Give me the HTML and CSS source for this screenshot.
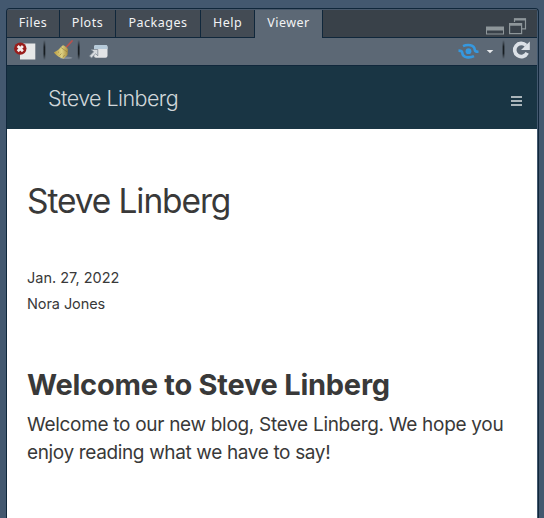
FILE: index.html
```html
<!DOCTYPE html>
<html lang="en">
<head>
<meta charset="utf-8">
<title>Viewer</title>
<link rel="stylesheet" href="styles.css">
</head>
<body>
<main class="pane">
  <nav class="tabs">
    <span class="tab files"><span>Files</span></span>
    <span class="tab plots"><span>Plots</span></span>
    <span class="tab packages"><span>Packages</span></span>
    <span class="tab help"><span>Help</span></span>
    <span class="tab viewer"><span>Viewer</span></span>
    <svg class="window-controls" width="42" height="19" viewBox="0 0 42 19">
      <rect x="1" y="8.500" width="18" height="8" fill="#8e969a"/>
      <rect x="2" y="12.500" width="16" height="3" fill="#394149"/>
      <path d="M29.500 4V.8h11v10h-3.500" fill="none" stroke="#8e969a" stroke-width="1.200"/>
      <path d="M29 1.500h12" stroke="#8e969a" stroke-width="2"/>
      <rect x="24.600" y="5.600" width="12" height="10" fill="#394149" stroke="#8e969a" stroke-width="1.200"/>
      <path d="M24 6.500h13" stroke="#8e969a" stroke-width="2.500"/>
    </svg>
  </nav>
  <div class="toolbar">
    <svg width="110" height="27" viewBox="7 38 110 27">
      <defs>
        <linearGradient id="sep" x2="0" y2="1"><stop stop-color="#171d22" stop-opacity="0"/><stop offset=".35" stop-color="#171d22"/><stop offset=".7" stop-color="#171d22"/><stop offset="1" stop-color="#171d22" stop-opacity="0"/></linearGradient>
        <linearGradient id="straw"><stop stop-color="#b99b41"/><stop offset=".55" stop-color="#ded283"/><stop offset="1" stop-color="#a78b3d"/></linearGradient>
      </defs>
      <rect x="20" y="43.500" width="15.300" height="16" fill="#e7e8e8"/>
      <circle cx="20.300" cy="48.600" r="6.200" fill="#991d1b"/>
      <path d="M17.700 46l5.200 5.200m0-5.200l-5.200 5.200" stroke="#f5eeee" stroke-width="2.700"/>
      <rect x="43.500" y="40" width="1.800" height="20" fill="url(#sep)"/>
      <ellipse cx="66" cy="57.800" rx="6.500" ry="1.300" fill="#828c98"/>
      <path d="M65.500 48l6.500-7" stroke="#ba514d" stroke-width="1.800" stroke-linecap="round"/>
      <path d="M62 46q1-1.200 2.400-.2l2.500 2q1.700 1.500.9 3.200l-.3 4-3.900 3.700q-5.800-1.500-9.800-6.200 5.200-2.500 8.200-6.500z" fill="url(#straw)"/>
      <path d="M61 47.500l6.300 4.500M58 52.500l1-.7m.5 3.700l2-2m1.500 4l1.500-2.500" stroke="#8b763b" stroke-width=".6"/>
      <rect x="77.800" y="40" width="1.800" height="20" fill="url(#sep)"/>
      <rect x="94" y="45" width="13.500" height="12.700" rx="2" fill="#e2e4e6"/>
      <path d="M94 49v-2q0-2 2-2h9.500q2 0 2 2v2z" fill="#b6cad9"/>
      <path d="M91 49.500h6.800v6.300l-2.100-2-4.200 4.100-2-2 4.100-4.100z" fill="#d6dade" stroke="#7c8792" stroke-width=".8"/>
    </svg>
    <svg width="80" height="27" viewBox="457 38 80 27">
      <circle cx="468.500" cy="51.200" r="2.900" fill="#3598df"/>
      <path d="M463 46.200q3.500-1.700 7.500-1 4 .8 4.300 4.800.2 1.800 3.700 1.800M458.500 50.600q3.500 0 3.700 1.800.3 4 4.300 4.800 4 .7 7.500-1" fill="none" stroke="#3598df" stroke-width="2.600"/>
      <path d="M486.700 50h6.600l-3.300 3.200z" fill="#e6e8eb"/>
      <rect x="502.600" y="40" width="1.800" height="19" fill="url(#sep)"/>
      <path d="M526 45.400a6.600 6.600 0 1 0 1.200 7.500" fill="none" stroke="#dce1e7" stroke-width="3.700"/>
      <path d="M521 50h8.800V41.500z" fill="#dce1e7"/>
    </svg>
  </div>
  <header class="site-header">
    <span class="brand">Steve Linberg</span>
    <svg width="11" height="10" viewBox="0 0 11 10"><path d="M0 1h11M0 5h11M0 9h11" stroke="#dadfe1" stroke-width="1.600"/></svg>
  </header>
  <article class="content">
    <h1><span>Steve Linberg</span></h1>
    <p class="meta date"><span>Jan. 27, 2022</span></p>
    <p class="meta author"><span>Nora Jones</span></p>
    <h2><span>Welcome to Steve Linberg</span></h2>
    <p class="copy"><span class="first">Welcome to our new blog, Steve Linberg. We hope you</span><br><span class="second">enjoy reading what we have to say!</span></p>
  </article>
</main>
</body>
</html>
```
FILE: styles.css
```css
* { box-sizing: border-box; }
body {
  margin: 0;
  height: 518px;
  padding: 8px 5px 0 6px;
  overflow: hidden;
  background: #43586f;
  font-family: Inter, "Liberation Sans", sans-serif;
  color: #393939;
}
.pane {
  height: 510px;
  border: 1px solid #10273b;
  border-bottom: 0;
  border-radius: 4px 4px 0 0;
  padding-right: 1px;
  overflow: hidden;
  background: #43586f;
}
.tabs {
  display: flex;
  height: 29px;
  background: #394149;
  border-bottom: 1px solid #10273b;
  border-top: 1px solid #48586a;
  font: 400 12.500px/25px "Noto Sans", sans-serif;
  letter-spacing: .5px;
  color: #f2f3f4;
}
.tab {
  height: 27px;
  text-align: center;
  background: #434b54;
  border-right: 1px solid #10273b;
  white-space: nowrap;
}
.files { width: 53px; }
.plots { width: 56px; }
.packages { width: 85px; }
.help { width: 54px; }
.viewer { width: 68px; height: 28px; background: #5c6875; }
.window-controls { margin: 8px 10px 0 auto; }
.toolbar {
  display: flex;
  justify-content: space-between;
  height: 28px;
  background: #5c6875;
  border-bottom: 1px solid #10273b;
}
.site-header {
  display: flex;
  align-items: center;
  justify-content: space-between;
  height: 63px;
  padding: 0 15px 0 41px;
  background: #193544;
}
.site-header svg { margin-top: 6px; }
.brand { margin-top: 1px; font-size: 21.500px; font-weight: 300; color: #d1d7da; letter-spacing: -.57px; }
.content { height: 389px; padding: 49px 20px 0; background: #fff; white-space: nowrap; }
h1, h2, p { margin: 0; }
h1 { font-size: 33.500px; line-height: 46px; font-weight: 400; letter-spacing: -1.1px; }
.meta { font-size: 14.500px; line-height: 26px; }
.author { letter-spacing: -.08px; }
.date { margin-top: 41px; }
h2 { margin-top: 48px; font-size: 29px; line-height: 40px; font-weight: 700; letter-spacing: -.24px; }
.copy { margin-top: 6px; font-size: 19px; line-height: 28px; letter-spacing: -.3px; }
.second { letter-spacing: -.36px; }
```
